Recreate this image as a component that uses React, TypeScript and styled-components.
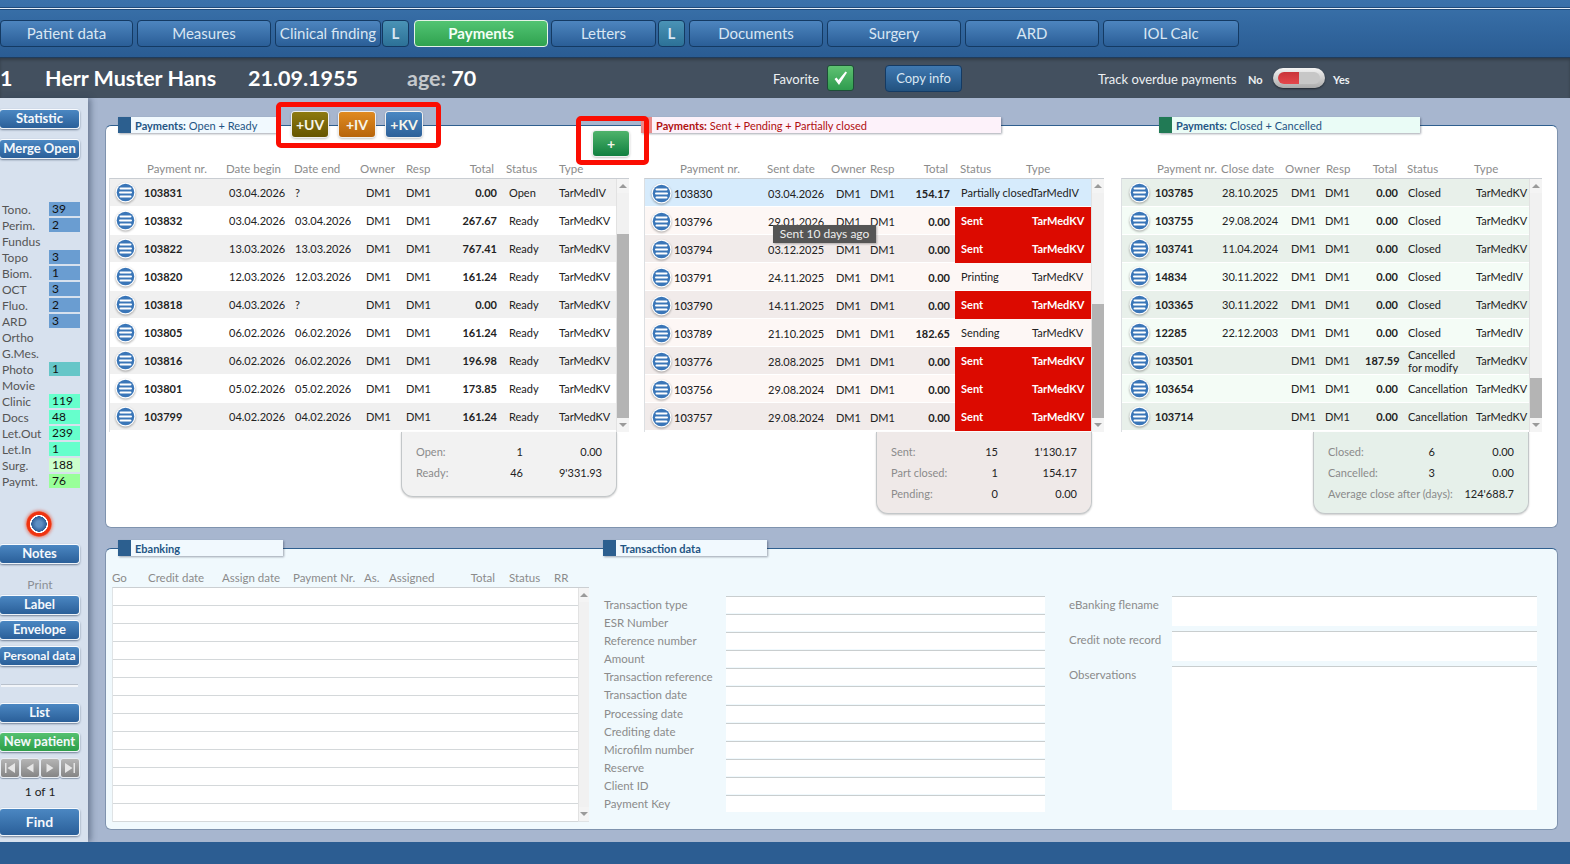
import styled, { createGlobalStyle } from 'styled-components'

const GlobalStyle = createGlobalStyle`
  html, body {
    margin: 0;
    padding: 0;
    background: #a7b6cf;
    font-family: "Lato", "Noto Sans", sans-serif;
    overflow: hidden;
  }
  * { box-sizing: border-box; }
`

const Page = styled.div`
  position: relative;
  width: 1570px;
  height: 864px;
  display: flex;
  flex-direction: column;
  overflow: hidden;
  background: #a7b6cf;
`

/* top navigation */
const TopBar = styled.div`
  height: 58px;
  flex: none;
  padding-top: 7px;
  background: linear-gradient(#3a72ab, #2a5c93);
  border-bottom: 1px solid #1f3c5c;
`

const TopLine = styled.div`
  height: 3px;
  background: #e6eff7;
  border-top: 1px solid #1d4a7a;
  border-bottom: 1px solid #1d4a7a;
`

const TabRow = styled.div`
  display: flex;
  margin-top: 10px;
  height: 27px;
`

const Tab = styled.div<{ $w: number; $gap?: number; $active?: boolean; $small?: boolean }>`
  width: ${(p) => p.$w}px;
  margin-right: ${(p) => p.$gap ?? 4}px;
  padding-bottom: 2px;
  display: flex;
  align-items: center;
  justify-content: center;
  border-radius: 4px;
  font-size: 15px;
  white-space: nowrap;
  color: ${(p) => (p.$active ? '#f4fff5' : '#d8e6f3')};
  font-weight: ${(p) => (p.$small || p.$active ? 700 : 400)};
  background: ${(p) =>
    p.$active
      ? 'linear-gradient(#52c473, #2fa24f)'
      : p.$small
        ? 'linear-gradient(#4a93b6, #2c7197)'
        : 'linear-gradient(#4d85bf, #2a5e97)'};
  border: 1px solid ${(p) => (p.$active ? '#e4f3e7' : '#143a63')};
`

/* patient strip */
const PatientBar = styled.div`
  height: 40px;
  flex: none;
  display: flex;
  align-items: center;
  background: #43505f;
  color: #fff;
  box-shadow: inset 0 2px 3px rgba(0, 0, 0, 0.25);
`

const PatientText = styled.span<{ $w: number }>`
  width: ${(p) => p.$w}px;
  flex: none;
  font-size: 21.5px;
  font-weight: 700;
  white-space: nowrap;
  color: #fff;
  span { color: #c4c8cc; }
`

const BarLabel = styled.span<{ $w: number; $small?: boolean }>`
  width: ${(p) => p.$w}px;
  flex: none;
  padding-top: 2px;
  font-size: ${(p) => (p.$small ? 11 : 13)}px;
  font-weight: ${(p) => (p.$small ? 700 : 400)};
  color: #edf0f3;
  white-space: nowrap;
`

const FavoriteBox = styled.div`
  width: 27px;
  height: 26px;
  flex: none;
  margin-right: 31px;
  border-radius: 3px;
  background: linear-gradient(#5fc272, #2f9c4e);
  border: 1px solid #1d4f37;
  display: flex;
  align-items: center;
  justify-content: center;
`

const CopyButton = styled.div`
  width: 77px;
  height: 27px;
  flex: none;
  margin-right: 136px;
  border-radius: 4px;
  display: flex;
  align-items: center;
  justify-content: center;
  font-size: 13px;
  color: #d9e6f2;
  background: linear-gradient(#3f78b1, #22527f);
  border: 1px solid #143a63;
`

const Toggle = styled.div`
  width: 52px;
  height: 20px;
  flex: none;
  margin-right: 8px;
  padding: 4px 5px;
  border-radius: 10px;
  background: linear-gradient(#f4f4f4, #aaa);
  box-shadow: 0 1px 2px rgba(0, 0, 0, 0.5);
  display: flex;
`

const ToggleOn = styled.div`
  width: 21px;
  background: linear-gradient(#c9353a, #e4474c);
  border-radius: 6px 0 0 6px;
`

const ToggleOff = styled.div`
  flex: 1;
  background: #c7c7c7;
  border-radius: 0 6px 6px 0;
`

/* body */
const Body = styled.div`
  flex: 1;
  display: flex;
  min-height: 0;
`

const Sidebar = styled.div`
  width: 88px;
  flex: none;
  padding: 11px 8px 0 0;
  display: flex;
  flex-direction: column;
  background: #d7e1ee;
  box-shadow: 3px 0 6px rgba(40, 55, 80, 0.45);
  z-index: 1;
`

const SideButton = styled.div<{ $mt: number; $h?: number; $green?: boolean; $fs?: number }>`
  margin-top: ${(p) => p.$mt}px;
  margin-left: -1px;
  height: ${(p) => p.$h ?? 20}px;
  flex: none;
  padding-bottom: 2px;
  display: flex;
  align-items: center;
  justify-content: center;
  white-space: nowrap;
  border-radius: 4px;
  color: #f4f8fc;
  font-weight: 700;
  font-size: ${(p) => p.$fs ?? 13}px;
  background: ${(p) =>
    p.$green ? 'linear-gradient(#55c170, #2c9e49)' : 'linear-gradient(#4b87c2, #2a5f99)'};
  border: 1px solid #eef3f8;
  border-top-color: #f8fbff;
  box-shadow: 0 1px 2px rgba(30, 50, 80, 0.55);
`

const StatList = styled.div`
  margin-top: 42px;
  display: flex;
  flex-direction: column;
`

const StatRow = styled.div`
  height: 16px;
  display: flex;
  align-items: center;
  justify-content: space-between;
  padding-left: 2px;
  font-size: 12px;
  color: #555;
`

const StatValue = styled.div<{ $bg: string }>`
  width: 31px;
  height: 14px;
  line-height: 14px;
  padding-left: 3px;
  background: ${(p) => p.$bg};
  color: #111;
  font-size: 12px;
`

const RecordDot = styled.div`
  margin: 22px 0 0 26px;
  width: 26px;
  height: 26px;
  flex: none;
  border-radius: 50%;
  background: radial-gradient(circle closest-side, #5d8fc4 0 22%, #2e5f98 58%, #fff 60% 68%, #ee3311 72% 90%, #f07a60 100%);
  box-shadow: 0 0 3px 1px rgba(230, 60, 30, 0.45);
`

const PrintLabel = styled.div`
  margin-top: 14px;
  height: 14px;
  line-height: 14px;
  text-align: center;
  font-size: 12px;
  color: #8a8f96;
`

const SideRule = styled.div`
  margin: 18px 2px 0 1px;
  height: 3px;
  background: #f2f5f9;
  border-top: 1px solid #b9c1cc;
  flex: none;
`

const NavRow = styled.div`
  margin-top: 6px;
  display: flex;
  height: 20px;
  flex: none;
`

const NavButton = styled.div`
  width: 20px;
  display: flex;
  align-items: center;
  justify-content: center;
  border-radius: 3px;
  background: linear-gradient(#b5b5b5, #858585);
  border: 1px solid #e9edf2;
  box-shadow: 0 1px 1px rgba(30, 50, 80, 0.4);
`

const PageCount = styled.div`
  margin-top: 7px;
  height: 14px;
  line-height: 14px;
  text-align: center;
  font-size: 12px;
  color: #222;
`

const Main = styled.div`
  flex: 1;
  min-width: 0;
  padding: 27px 12px 13px 17px;
  display: flex;
  flex-direction: column;
  gap: 20px;
`

const Panel = styled.div<{ $h: number; $bg: string }>`
  height: ${(p) => p.$h}px;
  flex: none;
  background: ${(p) => p.$bg};
  border: 1px solid #2f5f8f;
  border-color: #2f5f8f #7f93ae #7f93ae #7f93ae;
  border-radius: 6px;
`

const TitleRow = styled.div<{ $h: number }>`
  display: flex;
  align-items: flex-start;
  height: ${(p) => p.$h}px;
  margin-top: -9px;
  padding-left: 12px;
`

const TitleTab = styled.div<{ $w: number; $bg: string; $ink: string; $mark: string; $ml?: number; $markW?: number }>`
  width: ${(p) => p.$w}px;
  height: 16px;
  flex: none;
  margin-left: ${(p) => p.$ml ?? 0}px;
  display: flex;
  align-items: center;
  font-size: 11px;
  white-space: nowrap;
  color: ${(p) => p.$ink};
  background: ${(p) => p.$bg};
  box-shadow: 1px 1px 2px rgba(30, 40, 60, 0.4);
  &::before {
    content: '';
    width: ${(p) => p.$markW ?? 13}px;
    height: 100%;
    margin-right: 4px;
    background: ${(p) => p.$mark};
  }
  b { margin-right: 3px; }
`

const AddButton = styled.div<{ $bg: string; $ml: number; $mt: number }>`
  width: 36px;
  height: 25px;
  flex: none;
  margin: ${(p) => p.$mt}px 0 0 ${(p) => p.$ml}px;
  display: flex;
  align-items: center;
  justify-content: center;
  border-radius: 3px;
  color: #f6f6ea;
  font-size: 14px;
  font-weight: 700;
  background: ${(p) => p.$bg};
  box-shadow: 0 0 0 1px #f0f0f0, 0 1px 3px rgba(0, 0, 0, 0.45);
`

const Columns = styled.div`
  display: flex;
  padding-left: 3px;
`

const Column = styled.div<{ $w: number; $ml?: number }>`
  width: ${(p) => p.$w}px;
  flex: none;
  margin-left: ${(p) => p.$ml ?? 0}px;
`

const HeadRow = styled.div<{ $cols: string }>`
  height: 18px;
  padding-bottom: 2px;
  display: grid;
  grid-template-columns: ${(p) => p.$cols};
  align-items: center;
  font-size: 11.5px;
  color: #8b8b8b;
  white-space: nowrap;
`

const HeadRight = styled.span`
  text-align: right;
`

const TableFrame = styled.div`
  display: flex;
  border-top: 1px solid #c9cdd2;
  border-left: 1px solid #dcdfe2;
`

const Rows = styled.div`
  flex: 1;
  min-width: 0;
`

const Row = styled.div<{ $cols: string; $bg: string }>`
  height: 28px;
  display: grid;
  grid-template-columns: ${(p) => p.$cols};
  align-items: center;
  font-size: 11px;
  color: #222;
  white-space: nowrap;
  background: ${(p) => p.$bg};
  border-bottom: 1px solid #fff;
`

const MenuCell = styled.div<{ $pl?: number }>`
  padding-left: ${(p) => p.$pl ?? 5}px;
  display: flex;
  align-items: center;
`

const MenuDot = styled.svg`
  width: 21px;
  height: 21px;
  display: block;
  filter: drop-shadow(0 1px 1px rgba(0, 0, 0, 0.35));
`

const Bold = styled.span`
  font-weight: 700;
`

const Num = styled.span`
  font-weight: 700;
  text-align: right;
`

const Cell = styled.span``

const SentNr = styled.span`
  font-weight: 500;
`

const Flagged = styled.span<{ $red: boolean; $cols: string }>`
  align-self: start;
  height: 28px;
  display: grid;
  grid-template-columns: ${(p) => p.$cols};
  align-items: center;
  padding: 0 0 1px 6px;
  color: ${(p) => (p.$red ? '#fff' : '#222')};
  font-weight: ${(p) => (p.$red ? 700 : 400)};
  background: ${(p) => (p.$red ? '#dc0a00' : 'transparent')};
`

const TwoLine = styled.span`
  max-width: 55px;
  white-space: normal;
  line-height: 13px;
`

const Scrollbar = styled.div<{ $w?: number }>`
  width: ${(p) => p.$w ?? 13}px;
  flex: none;
  display: flex;
  flex-direction: column;
  background: #f1f1f1;
  border-left: 1px solid #e2e2e2;
`

const ScrollArrow = styled.div<{ $down?: boolean }>`
  height: 14px;
  flex: none;
  display: flex;
  align-items: center;
  justify-content: center;
  margin-top: ${(p) => (p.$down ? 'auto' : '0')};
  background: #f4f4f4;
  &::after {
    content: '';
    border-left: 4px solid transparent;
    border-right: 4px solid transparent;
    ${(p) => (p.$down ? 'border-top: 4px solid #9a9a9a;' : 'border-bottom: 4px solid #9a9a9a;')}
  }
`

const ScrollThumb = styled.div<{ $top: number; $h: number }>`
  margin-top: ${(p) => p.$top}px;
  height: ${(p) => p.$h}px;
  flex: none;
  background: #b4b4b4;
`

const Summary = styled.div<{ $ml: number; $bg: string; $h: number }>`
  width: 216px;
  height: ${(p) => p.$h}px;
  margin-left: ${(p) => p.$ml}px;
  padding: 9px 14px 0 14px;
  background: ${(p) => p.$bg};
  border: 1px solid #c3c7c9;
  border-top: none;
  border-radius: 0 0 12px 12px;
  box-shadow: 0 1px 2px rgba(0, 0, 0, 0.2);
`

const SummaryRow = styled.div<{ $cols?: string }>`
  height: 21px;
  display: grid;
  grid-template-columns: ${(p) => p.$cols ?? '76px 31px 1fr'};
  align-items: center;
  font-size: 11px;
  color: #222;
  white-space: nowrap;
`

const SummaryLabel = styled.span`
  color: #8b8b8b;
`

const SummaryValue = styled.span`
  text-align: right;
`

const Hint = styled.div`
  position: absolute;
  left: 773px;
  top: 225px;
  width: 103px;
  height: 18px;
  line-height: 18px;
  text-align: center;
  font-size: 12px;
  color: #eee;
  background: #555;
  box-shadow: 1px 1px 2px rgba(0, 0, 0, 0.3);
  z-index: 4;
`

const Callout = styled.div<{ $x: number; $y: number; $w: number; $h: number }>`
  position: absolute;
  left: ${(p) => p.$x}px;
  top: ${(p) => p.$y}px;
  width: ${(p) => p.$w}px;
  height: ${(p) => p.$h}px;
  border: 5px solid #fb0d02;
  border-radius: 5px;
  z-index: 5;
`

/* ebanking panel */
const BankColumns = styled.div`
  display: flex;
  padding-left: 6px;
`

const BankList = styled.div`
  width: 477px;
  flex: none;
`

const BankTable = styled.div`
  display: flex;
  height: 235px;
  background: #fff;
  border-top: 1px solid #cbcfd2;
  border-left: 1px solid #dfe3e5;
  border-bottom: 1px solid #dfe3e5;
`

const BankRow = styled.div`
  height: 18px;
  border-bottom: 1px solid #d4d8da;
`

const FormCol = styled.div<{ $ml: number; $w: number }>`
  width: ${(p) => p.$w}px;
  flex: none;
  margin-left: ${(p) => p.$ml}px;
  padding-top: 27px;
`

const FormRow = styled.div<{ $h: number; $label: number }>`
  height: ${(p) => p.$h}px;
  display: grid;
  grid-template-columns: ${(p) => p.$label}px 1fr;
  font-size: 11.5px;
  color: #8b8b8b;
  white-space: nowrap;
`

const FormField = styled.div<{ $pb?: number }>`
  background: #fff;
  border-top: 1px solid #c9cecf;
  margin-bottom: ${(p) => p.$pb ?? 1}px;
`

const FormLabel = styled.span`
  line-height: 16px;
  padding-top: 1px;
`

const Footer = styled.div`
  height: 22px;
  flex: none;
  background: #2c5d92;
  z-index: 2;
`

function MenuIcon() {
  return (
    <MenuDot viewBox="0 0 21 21">
      <circle cx="10.5" cy="10.5" r="10" fill="#fff" />
      <circle cx="10.5" cy="10.5" r="8.8" fill="#3a76b8" />
      <path d="M5.5 6.6h10M5 10.5h11M5.5 14.4h10" stroke="#fff" strokeWidth="2" strokeLinecap="round" />
    </MenuDot>
  )
}

function ScrollBar(props: { top: number; h: number }) {
  return (
    <Scrollbar>
      <ScrollArrow />
      <ScrollThumb $top={props.top} $h={props.h} />
      <ScrollArrow $down />
    </Scrollbar>
  )
}

const tabs = [
  { t: 'Patient data', w: 133 },
  { t: 'Measures', w: 134 },
  { t: 'Clinical finding', w: 106, gap: 1 },
  { t: 'L', w: 27, gap: 5, small: true },
  { t: 'Payments', w: 134, gap: 3, active: true },
  { t: 'Letters', w: 105, gap: 2 },
  { t: 'L', w: 27, small: true },
  { t: 'Documents', w: 134 },
  { t: 'Surgery', w: 134 },
  { t: 'ARD', w: 134 },
  { t: 'IOL Calc', w: 136 },
]

const BLUE = '#6a9dd1'
const MINT = '#66ffcc'
const stats: [string, string, string][] = [
  ['Tono.', '39', BLUE], ['Perim.', '2', BLUE], ['Fundus', '', ''], ['Topo', '3', BLUE],
  ['Biom.', '1', BLUE], ['OCT', '3', BLUE], ['Fluo.', '2', BLUE], ['ARD', '3', BLUE],
  ['Ortho', '', ''], ['G.Mes.', '', ''], ['Photo', '1', '#66c6c8'], ['Movie', '', ''],
  ['Clinic', '119', MINT], ['Docs', '48', MINT], ['Let.Out', '239', MINT], ['Let.In', '1', MINT],
  ['Surg.', '188', '#ccffcc'], ['Paymt.', '76', '#99ff99'],
]

const openCols = '34px 85px 66px 71px 40px 46px 45px 12px 50px 58px'
const openHead = '38px 79px 68px 66px 46px 45px 43px 12px 53px 1fr'
const openRows = [
  ['103831', '03.04.2026', '?', '0.00', 'Open', 'TarMedIV'],
  ['103832', '03.04.2026', '03.04.2026', '267.67', 'Ready', 'TarMedKV'],
  ['103822', '13.03.2026', '13.03.2026', '767.41', 'Ready', 'TarMedKV'],
  ['103820', '12.03.2026', '12.03.2026', '161.24', 'Ready', 'TarMedKV'],
  ['103818', '04.03.2026', '?', '0.00', 'Ready', 'TarMedKV'],
  ['103805', '06.02.2026', '06.02.2026', '161.24', 'Ready', 'TarMedKV'],
  ['103816', '06.02.2026', '06.02.2026', '196.98', 'Ready', 'TarMedKV'],
  ['103801', '05.02.2026', '05.02.2026', '173.85', 'Ready', 'TarMedKV'],
  ['103799', '04.02.2026', '04.02.2026', '161.24', 'Ready', 'TarMedKV'],
]

const sentCols = '29px 94px 68px 34px 40px 40px 5px 136px'
const sentHead = '36px 87px 64px 39px 40px 38px 12px 66px 1fr'
const sentRows = [
  ['103830', '03.04.2026', '154.17', 'Partially closed', 'TarMedIV'],
  ['103796', '29.01.2026', '0.00', 'Sent', 'TarMedKV'],
  ['103794', '03.12.2025', '0.00', 'Sent', 'TarMedKV'],
  ['103791', '24.11.2025', '0.00', 'Printing', 'TarMedKV'],
  ['103790', '14.11.2025', '0.00', 'Sent', 'TarMedKV'],
  ['103789', '21.10.2025', '182.65', 'Sending', 'TarMedKV'],
  ['103776', '28.08.2025', '0.00', 'Sent', 'TarMedKV'],
  ['103756', '29.08.2024', '0.00', 'Sent', 'TarMedKV'],
  ['103757', '29.08.2024', '0.00', 'Sent', 'TarMedKV'],
]

const closedCols = '33px 67px 69px 34px 40px 33px 10px 68px 1fr'
const closedHead = '36px 64px 64px 41px 40px 31px 10px 67px 1fr'
const closedRows = [
  ['103785', '28.10.2025', 'Closed', 'TarMedKV'],
  ['103755', '29.08.2024', 'Closed', 'TarMedKV'],
  ['103741', '11.04.2024', 'Closed', 'TarMedKV'],
  ['14834', '30.11.2022', 'Closed', 'TarMedIV'],
  ['103365', '30.11.2022', 'Closed', 'TarMedKV'],
  ['12285', '22.12.2003', 'Closed', 'TarMedIV'],
  ['103501', '', 'Cancelled for modify', 'TarMedKV', '187.59'],
  ['103654', '', 'Cancellation', 'TarMedKV'],
  ['103714', '', 'Cancellation', 'TarMedKV'],
]

const bankFields = [
  'Transaction type', 'ESR Number', 'Reference number', 'Amount', 'Transaction reference', 'Transaction date',
  'Processing date', 'Crediting date', 'Microfilm number', 'Reserve', 'Client ID', 'Payment Key',
]

export default function App() {
  return (
    <Page>
      <GlobalStyle />
      <TopBar>
        <TopLine />
        <TabRow>
          {tabs.map((tab, i) => (
            <Tab key={i} $w={tab.w} $gap={tab.gap} $active={tab.active} $small={tab.small}>
              {tab.t}
            </Tab>
          ))}
        </TabRow>
      </TopBar>

      <PatientBar>
        <PatientText $w={45}>1</PatientText>
        <PatientText $w={203}>Herr Muster Hans</PatientText>
        <PatientText $w={159}>21.09.1955</PatientText>
        <PatientText $w={366}><span>age:</span> 70</PatientText>
        <BarLabel $w={54}>Favorite</BarLabel>
        <FavoriteBox>
          <svg width="17" height="17" viewBox="0 0 17 17">
            <path d="M2.5 9l2-1.5 2 2.5L13.5 1.5l1.5 1L7 15z" fill="#fff" />
          </svg>
        </FavoriteBox>
        <CopyButton>Copy info</CopyButton>
        <BarLabel $w={150}>Track overdue payments</BarLabel>
        <BarLabel $w={25} $small>No</BarLabel>
        <Toggle>
          <ToggleOn />
          <ToggleOff />
        </Toggle>
        <BarLabel $w={30} $small>Yes</BarLabel>
      </PatientBar>

      <Body>
        <Sidebar>
          <SideButton $mt={0}>Statistic</SideButton>
          <SideButton $mt={10}>Merge Open</SideButton>
          <StatList>
            {stats.map(([label, value, bg]) => (
              <StatRow key={label}>
                {label}
                {value && <StatValue $bg={bg}>{value}</StatValue>}
              </StatRow>
            ))}
          </StatList>
          <RecordDot />
          <SideButton $mt={7}>Notes</SideButton>
          <PrintLabel>Print</PrintLabel>
          <SideButton $mt={3}>Label</SideButton>
          <SideButton $mt={5}>Envelope</SideButton>
          <SideButton $mt={6} $fs={12}>Personal data</SideButton>
          <SideRule />
          <SideButton $mt={16}>List</SideButton>
          <SideButton $mt={9} $green>New patient</SideButton>
          <NavRow>
            <NavButton>
              <svg width="12" height="10" viewBox="0 0 12 10"><path d="M1 0h1.5v10H1zM11 0v10L3.5 5z" fill="#e6e6e6" /></svg>
            </NavButton>
            <NavButton>
              <svg width="10" height="10" viewBox="0 0 10 10"><path d="M8.5 0.5v9L1.5 5z" fill="#e6e6e6" /></svg>
            </NavButton>
            <NavButton>
              <svg width="10" height="10" viewBox="0 0 10 10"><path d="M1.5 0.5v9L8.5 5z" fill="#e6e6e6" /></svg>
            </NavButton>
            <NavButton>
              <svg width="12" height="10" viewBox="0 0 12 10"><path d="M1 0v10l7.5-5zM9.5 0H11v10H9.5z" fill="#e6e6e6" /></svg>
            </NavButton>
          </NavRow>
          <PageCount>1 of 1</PageCount>
          <SideButton $mt={9} $h={28} $fs={14}>Find</SideButton>
        </Sidebar>

        <Main>
          <Panel $h={403} $bg="#fff">
            <TitleRow $h={43}>
              <TitleTab $w={158} $bg="#f1f9fe" $ink="#1f5584" $mark="#2c5f8f">
                <b>Payments:</b> Open + Ready
              </TitleTab>
              <AddButton $bg="linear-gradient(#8d7a10, #665500)" $ml={16} $mt={-5}>+UV</AddButton>
              <AddButton $bg="linear-gradient(#e08a20, #b7650c)" $ml={11} $mt={-5}>+IV</AddButton>
              <AddButton $bg="linear-gradient(#4a87c2, #2e6199)" $ml={11} $mt={-5}>+KV</AddButton>
              <AddButton $bg="linear-gradient(#4fb36b, #118040)" $ml={171} $mt={14}>+</AddButton>
              <TitleTab $w={360} $bg="#fdf2fa" $ink="#b01010" $mark="#e88a8a" $ml={12} $markW={11}>
                <b>Payments:</b> Sent + Pending + Partially closed
              </TitleTab>
              <TitleTab $w={261} $bg="#eafcf6" $ink="#1f5584" $mark="#217a55" $ml={158}>
                <b>Payments:</b> Closed + Cancelled
              </TitleTab>
            </TitleRow>
            <Columns>
              <Column $w={520}>
                <HeadRow $cols={openHead}>
                  <Cell /><Cell>Payment nr.</Cell><Cell>Date begin</Cell><Cell>Date end</Cell><Cell>Owner</Cell><Cell>Resp</Cell>
                  <HeadRight>Total</HeadRight><Cell /><Cell>Status</Cell><Cell>Type</Cell>
                </HeadRow>
                <TableFrame>
                  <Rows>
                    {openRows.map((r, i) => (
                      <Row key={r[0]} $cols={openCols} $bg={i % 2 ? '#fff' : '#f0f0f0'}>
                        <MenuCell><MenuIcon /></MenuCell>
                        <Bold>{r[0]}</Bold>
                        <Cell>{r[1]}</Cell>
                        <Cell>{r[2]}</Cell>
                        <Cell>DM1</Cell>
                        <Cell>DM1</Cell>
                        <Num>{r[3]}</Num>
                        <Cell />
                        <Cell>{r[4]}</Cell>
                        <Cell>{r[5]}</Cell>
                      </Row>
                    ))}
                  </Rows>
                  <ScrollBar top={41} h={184} />
                </TableFrame>
                <Summary $ml={292} $bg="#f2f2f2" $h={65}>
                  <SummaryRow><SummaryLabel>Open:</SummaryLabel><SummaryValue>1</SummaryValue><SummaryValue>0.00</SummaryValue></SummaryRow>
                  <SummaryRow><SummaryLabel>Ready:</SummaryLabel><SummaryValue>46</SummaryValue><SummaryValue>9'331.93</SummaryValue></SummaryRow>
                </Summary>
              </Column>

              <Column $w={460} $ml={15}>
                <HeadRow $cols={sentHead}>
                  <Cell /><Cell>Payment nr.</Cell><Cell>Sent date</Cell><Cell>Owner</Cell><Cell>Resp</Cell>
                  <HeadRight>Total</HeadRight><Cell /><Cell>Status</Cell><Cell>Type</Cell>
                </HeadRow>
                <TableFrame>
                  <Rows>
                    {sentRows.map((r, i) => (
                      <Row key={r[0]} $cols={sentCols} $bg={i === 0 ? '#d6ebfc' : i % 2 ? '#fdf7f5' : '#f1ebea'}>
                        <MenuCell $pl={6}><MenuIcon /></MenuCell>
                        <SentNr>{r[0]}</SentNr>
                        <Cell>{r[1]}</Cell>
                        <Cell>DM1</Cell>
                        <Cell>DM1</Cell>
                        <Num>{r[2]}</Num>
                        <Cell />
                        <Flagged $red={r[3] === 'Sent'} $cols="71px 1fr">
                          <Cell>{r[3]}</Cell>
                          <Cell>{r[4]}</Cell>
                        </Flagged>
                      </Row>
                    ))}
                  </Rows>
                  <ScrollBar top={111} h={114} />
                </TableFrame>
                <Summary $ml={232} $bg="#efe9e8" $h={82}>
                  <SummaryRow><SummaryLabel>Sent:</SummaryLabel><SummaryValue>15</SummaryValue><SummaryValue>1'130.17</SummaryValue></SummaryRow>
                  <SummaryRow><SummaryLabel>Part closed:</SummaryLabel><SummaryValue>1</SummaryValue><SummaryValue>154.17</SummaryValue></SummaryRow>
                  <SummaryRow><SummaryLabel>Pending:</SummaryLabel><SummaryValue>0</SummaryValue><SummaryValue>0.00</SummaryValue></SummaryRow>
                </Summary>
              </Column>

              <Column $w={421} $ml={17}>
                <HeadRow $cols={closedHead}>
                  <Cell /><Cell>Payment nr.</Cell><Cell>Close date</Cell><Cell>Owner</Cell><Cell>Resp</Cell>
                  <HeadRight>Total</HeadRight><Cell /><Cell>Status</Cell><Cell>Type</Cell>
                </HeadRow>
                <TableFrame>
                  <Rows>
                    {closedRows.map((r, i) => (
                      <Row key={r[0]} $cols={closedCols} $bg={i % 2 ? '#f4fcf6' : '#e8f0ea'}>
                        <MenuCell $pl={7}><MenuIcon /></MenuCell>
                        <Bold>{r[0]}</Bold>
                        <Cell>{r[1]}</Cell>
                        <Cell>DM1</Cell>
                        <Cell>DM1</Cell>
                        <Num>{r[4] ?? '0.00'}</Num>
                        <Cell />
                        {r[2] === 'Cancelled for modify' ? <TwoLine>{r[2]}</TwoLine> : <Cell>{r[2]}</Cell>}
                        <Cell>{r[3]}</Cell>
                      </Row>
                    ))}
                  </Rows>
                  <ScrollBar top={185} h={40} />
                </TableFrame>
                <Summary $ml={192} $bg="#e6f0ea" $h={82}>
                  <SummaryRow><SummaryLabel>Closed:</SummaryLabel><SummaryValue>6</SummaryValue><SummaryValue>0.00</SummaryValue></SummaryRow>
                  <SummaryRow><SummaryLabel>Cancelled:</SummaryLabel><SummaryValue>3</SummaryValue><SummaryValue>0.00</SummaryValue></SummaryRow>
                  <SummaryRow $cols="1fr auto"><SummaryLabel>Average close after (days):</SummaryLabel><SummaryValue>124'688.7</SummaryValue></SummaryRow>
                </Summary>
              </Column>
            </Columns>
          </Panel>

          <Panel $h={282} $bg="#f0f9fd">
            <TitleRow $h={29}>
              <TitleTab $w={165} $bg="#f1f9fe" $ink="#1f5584" $mark="#2c5f8f"><b>Ebanking</b></TitleTab>
              <TitleTab $w={164} $bg="#f1f9fe" $ink="#1f5584" $mark="#2c5f8f" $ml={320}><b>Transaction data</b></TitleTab>
            </TitleRow>
            <BankColumns>
              <BankList>
                <HeadRow $cols="36px 74px 71px 71px 25px 66px 40px 14px 45px 1fr">
                  <Cell>Go</Cell><Cell>Credit date</Cell><Cell>Assign date</Cell><Cell>Payment Nr.</Cell><Cell>As.</Cell><Cell>Assigned</Cell>
                  <HeadRight>Total</HeadRight><Cell /><Cell>Status</Cell><Cell>RR</Cell>
                </HeadRow>
                <BankTable>
                  <Rows>
                    {Array.from({ length: 13 }, (_, i) => <BankRow key={i} />)}
                  </Rows>
                  <Scrollbar $w={11}>
                    <ScrollArrow />
                    <ScrollArrow $down />
                  </Scrollbar>
                </BankTable>
              </BankList>
              <FormCol $ml={15} $w={441}>
                {bankFields.map((f) => (
                  <FormRow key={f} $h={18.1} $label={122}>
                    <FormLabel>{f}</FormLabel>
                    <FormField />
                  </FormRow>
                ))}
              </FormCol>
              <FormCol $ml={24} $w={468}>
                <FormRow $h={35} $label={103}><FormLabel>eBanking flename</FormLabel><FormField $pb={5} /></FormRow>
                <FormRow $h={35} $label={103}><FormLabel>Credit note record</FormLabel><FormField $pb={5} /></FormRow>
                <FormRow $h={145} $label={103}><FormLabel>Observations</FormLabel><FormField /></FormRow>
              </FormCol>
            </BankColumns>
          </Panel>
        </Main>
      </Body>

      <Footer />
      <Hint>Sent 10 days ago</Hint>
      <Callout $x={276} $y={102} $w={165} $h={46} />
      <Callout $x={576} $y={116} $w={73} $h={49} />
    </Page>
  )
}
